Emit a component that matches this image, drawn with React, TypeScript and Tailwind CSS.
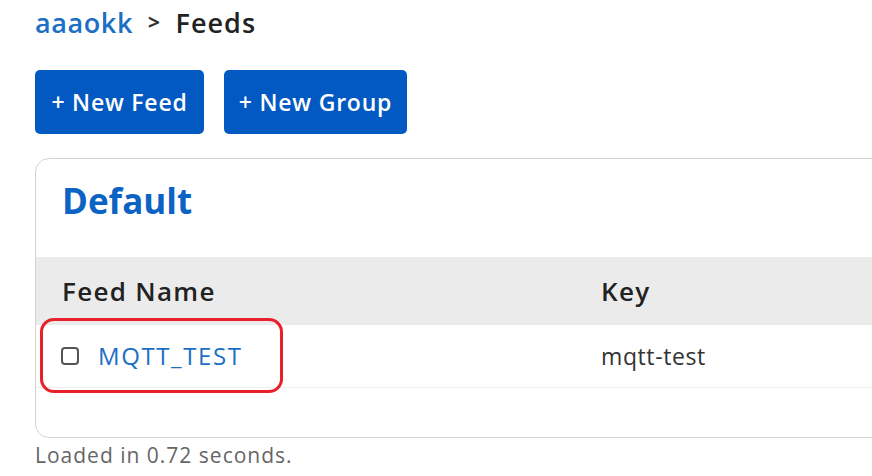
import React from "react";

const font = { fontFamily: "'Open Sans', Lato, sans-serif" };

const feeds = [{ name: "MQTT_TEST", key: "mqtt-test" }];

const App: React.FC = () => {
  return (
    <div className="w-[872px] h-[476px] overflow-hidden bg-white pl-[35px]" style={font}>
      <div className="flex items-center h-[46px] text-[27px] font-semibold tracking-[0.6px]">
        <span className="text-[#1c6fc4]">aaaokk</span>
        <span className="mx-[15px] text-[#333] text-[21px] font-bold">&gt;</span>
        <span className="text-[#222] tracking-[1px]">Feeds</span>
      </div>

      <div className="flex gap-[20px] mt-[24px]">
        <button className="h-[64px] w-[169px] rounded-[5px] bg-[#0259c2] text-white text-[23px] font-semibold tracking-[0.8px]">
          + New Feed
        </button>
        <button className="h-[64px] w-[183px] rounded-[5px] bg-[#0259c2] text-white text-[23px] font-semibold tracking-[0.8px]">
          + New Group
        </button>
      </div>

      <div className="mt-[24px] w-[900px] h-[280px] rounded-[14px] border border-[#d4d4d4]">
        <div className="h-[98px] pl-[26px] pt-[16px]">
          <h2 className="text-[35px] font-bold text-[#0b63c4]">Default</h2>
        </div>
        <div className="flex items-center h-[68px] bg-[#ebebeb] text-[26px] font-semibold text-[#222] tracking-[1.3px]">
          <div className="w-[565px] pl-[26px]">Feed Name</div>
          <div>Key</div>
        </div>
        {feeds.map((f) => (
          <div key={f.key} className="relative flex items-center h-[63px] border-b border-[#eeeeee]">
            <div className="w-[565px] pl-[25px] flex items-center gap-[19px]">
              <span className="w-[18px] h-[18px] rounded-[4px] border-2 border-[#555]" />
              <span className="text-[24px] text-[#1c6fc4] tracking-[1.6px]">{f.name}</span>
            </div>
            <div className="text-[23px] text-[#333] tracking-[0.6px]">{f.key}</div>
            <div className="absolute left-[4px] top-[-7px] w-[243px] h-[75px] rounded-[14px] border-[3px] border-[#e8202c]" />
          </div>
        ))}
      </div>

      <p className="mt-[2px] text-[21px] text-[#666] tracking-[1px]">Loaded in 0.72 seconds.</p>
    </div>
  );
};

export default App;
